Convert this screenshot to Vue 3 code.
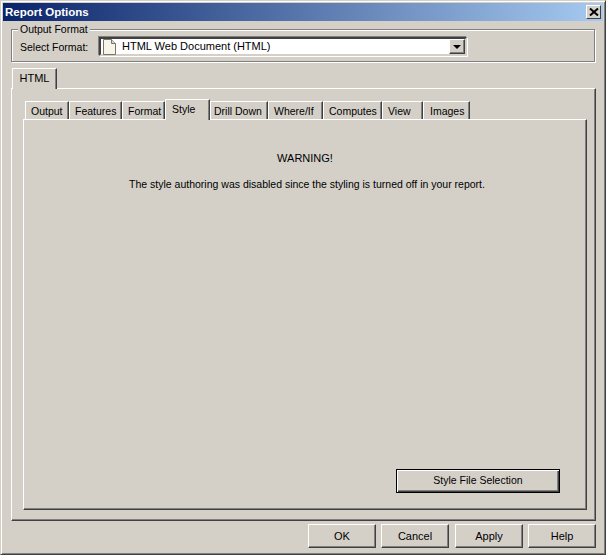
<script setup>
const tabs = [
  { label: 'Output', w: 44, pad: 5 },
  { label: 'Features', w: 53, pad: 5 },
  { label: 'Format', w: 43, pad: 5 },
  { label: 'Style', w: 45, pad: 6, active: true },
  { label: 'Drill Down', w: 58, pad: 3 },
  { label: 'Where/If', w: 55, pad: 5 },
  { label: 'Computes', w: 59, pad: 5 },
  { label: 'View', w: 41, pad: 5 },
  { label: 'Images', w: 47, pad: 6 }
]
const buttons = ['OK', 'Cancel', 'Apply', 'Help']
</script>

<template>
  <div class="dialog">
    <header class="titlebar">
      <span class="title">Report Options</span>
      <span class="close">
        <svg width="10" height="8" viewBox="0 0 10 8"><path d="M1 0.5l8 7M9 0.5l-8 7" fill="none" stroke="#000" stroke-width="2"/></svg>
      </span>
    </header>

    <div class="body">
      <div class="group">
        <span class="legend">Output Format</span>
        <label class="fmt-label">Select Format:</label>
        <div class="combo">
          <svg class="doc" width="13" height="16" viewBox="0 0 13 16">
            <path d="M.5.5h8l4 4v11H.5z" fill="#f7f5ea" stroke="#77756c"/>
            <path d="M8.5.5v4h4" fill="#d8d6cc" stroke="#77756c"/>
          </svg>
          <span class="combo-text">HTML Web Document (HTML)</span>
          <span class="combo-btn"><i class="arrow"></i></span>
        </div>
      </div>

      <div class="outer-tabs">
        <div class="outer-tab">HTML</div>
      </div>
      <section class="outer-panel">
        <div class="inner-tabs">
          <div
            v-for="t in tabs"
            :key="t.label"
            class="inner-tab"
            :class="{ active: t.active }"
            :style="{ width: t.w + 'px', paddingLeft: t.pad + 'px' }"
          >{{ t.label }}</div>
        </div>
        <div class="inner-panel">
          <p class="warn">WARNING!</p>
          <p class="msg">The style authoring was disabled since the styling is turned off in your report.</p>
          <div class="spacer"></div>
          <button class="style-btn">Style File Selection</button>
        </div>
      </section>

      <footer class="actions">
        <button v-for="b in buttons" :key="b" class="btn">{{ b }}</button>
      </footer>
    </div>
  </div>
</template>

<style>
html, body { margin: 0; background: #d4d0c8; }
</style>

<style scoped>
.dialog {
  width: 606px;
  height: 555px;
  box-sizing: border-box;
  background: #d4d0c8;
  border-top: 1px solid #d4d0c8;
  border-left: 1px solid #d4d0c8;
  border-right: 1px solid #404040;
  border-bottom: 1px solid #404040;
  box-shadow: inset 1px 1px 0 #fff, inset -1px -1px 0 #808080;
  padding: 2px;
  display: flex;
  flex-direction: column;
  font-family: "Liberation Sans", Arial, sans-serif;
  font-size: 11px;
  color: #000;
}
.titlebar {
  height: 18px;
  flex: none;
  background: linear-gradient(90deg, #0a246a, #a6caf0);
  display: flex;
  align-items: center;
  justify-content: space-between;
  padding: 0 2px;
}
.title { color: #fff; font-weight: 700; font-size: 11.5px; }
.close {
  width: 15px;
  height: 14px;
  box-sizing: border-box;
  background: #d4d0c8;
  border: 1px solid;
  border-color: #fff #404040 #404040 #fff;
  display: flex;
  align-items: center;
  justify-content: center;
}
.body {
  flex: 1;
  display: flex;
  flex-direction: column;
  padding: 0 7px 0 8px;
  min-height: 0;
}
.group {
  margin: 8px 1px 0 0;
  height: 33px;
  box-sizing: border-box;
  border: 1px solid #808080;
  box-shadow: inset 1px 1px 0 #fff, 1px 1px 0 #fff;
  padding: 0 0 0 8px;
  display: flex;
  align-items: center;
  position: relative;
}
.legend {
  padding: 0 2px;
  line-height: 12px;
  font-size: 10.5px;
  position: absolute;
  top: -7px;
  left: 6px;
  background: #d4d0c8;
}
.fmt-label { width: 79px; flex: none; white-space: nowrap; font-size: 10.5px; position: relative; top: 1px; }
.combo {
  width: 368px;
  height: 19px;
  box-sizing: border-box;
  background: #fff;
  border: 2px solid;
  border-color: #404040 #d4d0c8 #d4d0c8 #404040;
  box-shadow: 1px 1px 0 #fff, -1px -1px 0 #808080;
  display: flex;
  align-items: center;
  padding-left: 2px;
  position: relative;
  top: 1px;
}
.doc { flex: none; margin-right: 6px; }
.combo-text { flex: 1; padding-bottom: 2px; }
.combo-btn {
  width: 16px;
  height: 15px;
  box-sizing: border-box;
  background: #d4d0c8;
  border: 1px solid;
  border-color: #fff #404040 #404040 #fff;
  box-shadow: inset -1px -1px 0 #808080;
  display: flex;
  align-items: center;
  justify-content: center;
}
.arrow {
  width: 0;
  height: 0;
  border: 4px solid transparent;
  border-top-color: #000;
  border-bottom: 0;
}
.outer-tabs {
  display: flex;
  margin-top: 6px;
  height: 20px;
  flex: none;
  position: relative;
  z-index: 1;
}
.outer-tab {
  width: 45px;
  height: 21px;
  margin-left: 1px;
  box-sizing: border-box;
  background: #d4d0c8;
  border-top: 1px solid #fff;
  border-left: 1px solid #fff;
  border-right: 1px solid #404040;
  box-shadow: inset -1px 0 0 #808080;
  text-align: center;
  line-height: 18px;
}
.outer-panel {
  height: 433px;
  flex: none;
  box-sizing: border-box;
  border: 1px solid;
  border-color: #fff #404040 #404040 #fff;
  box-shadow: inset -1px -1px 0 #808080;
  padding: 10px 8px 0 11px;
}
.inner-tabs {
  display: flex;
  height: 20px;
  padding-left: 2px;
  align-items: flex-end;
  position: relative;
  z-index: 1;
}
.inner-tab {
  height: 18px;
  box-sizing: border-box;
  background: #d4d0c8;
  border-top: 1px solid #fff;
  border-left: 1px solid #fff;
  border-right: 1px solid #404040;
  box-shadow: inset -1px 0 0 #808080;
  text-align: left;
  white-space: nowrap;
  font-size: 10.5px;
  line-height: 19px;
  flex: none;
}
.inner-tab.active {
  height: 21px;
  line-height: 18px;
  margin-bottom: -1px;
}
.inner-panel {
  height: 391px;
  box-sizing: border-box;
  border: 1px solid;
  border-color: #fff #404040 #404040 #fff;
  box-shadow: inset -1px -1px 0 #808080;
  display: flex;
  flex-direction: column;
  align-items: center;
  padding: 31px 0 16px;
}
.warn { margin: 0; line-height: 14px; }
.msg { margin: 12px 0 0; line-height: 14px; padding-left: 4px; font-size: 10.5px; }
.spacer { flex: 1; }
.style-btn {
  align-self: flex-end;
  margin-right: 26px;
  width: 164px;
  height: 24px;
  box-sizing: border-box;
  font: inherit;
  font-size: 10.5px;
  background: #d4d0c8;
  border: 1px solid #000;
  box-shadow: inset 1px 1px 0 #fff, inset -1px -1px 0 #404040, inset -2px -2px 0 #808080;
  padding: 0 0 2px;
}
.actions {
  display: flex;
  justify-content: flex-end;
  gap: 5px;
  margin-top: 3px;
  margin-right: 0;
}
.btn {
  width: 68px;
  height: 24px;
  box-sizing: border-box;
  font: inherit;
  background: #d4d0c8;
  border: 1px solid;
  border-color: #fff #404040 #404040 #fff;
  box-shadow: inset -1px -1px 0 #808080;
  padding: 0;
}
.btn:nth-child(3) { margin-left: 1px; }
</style>
